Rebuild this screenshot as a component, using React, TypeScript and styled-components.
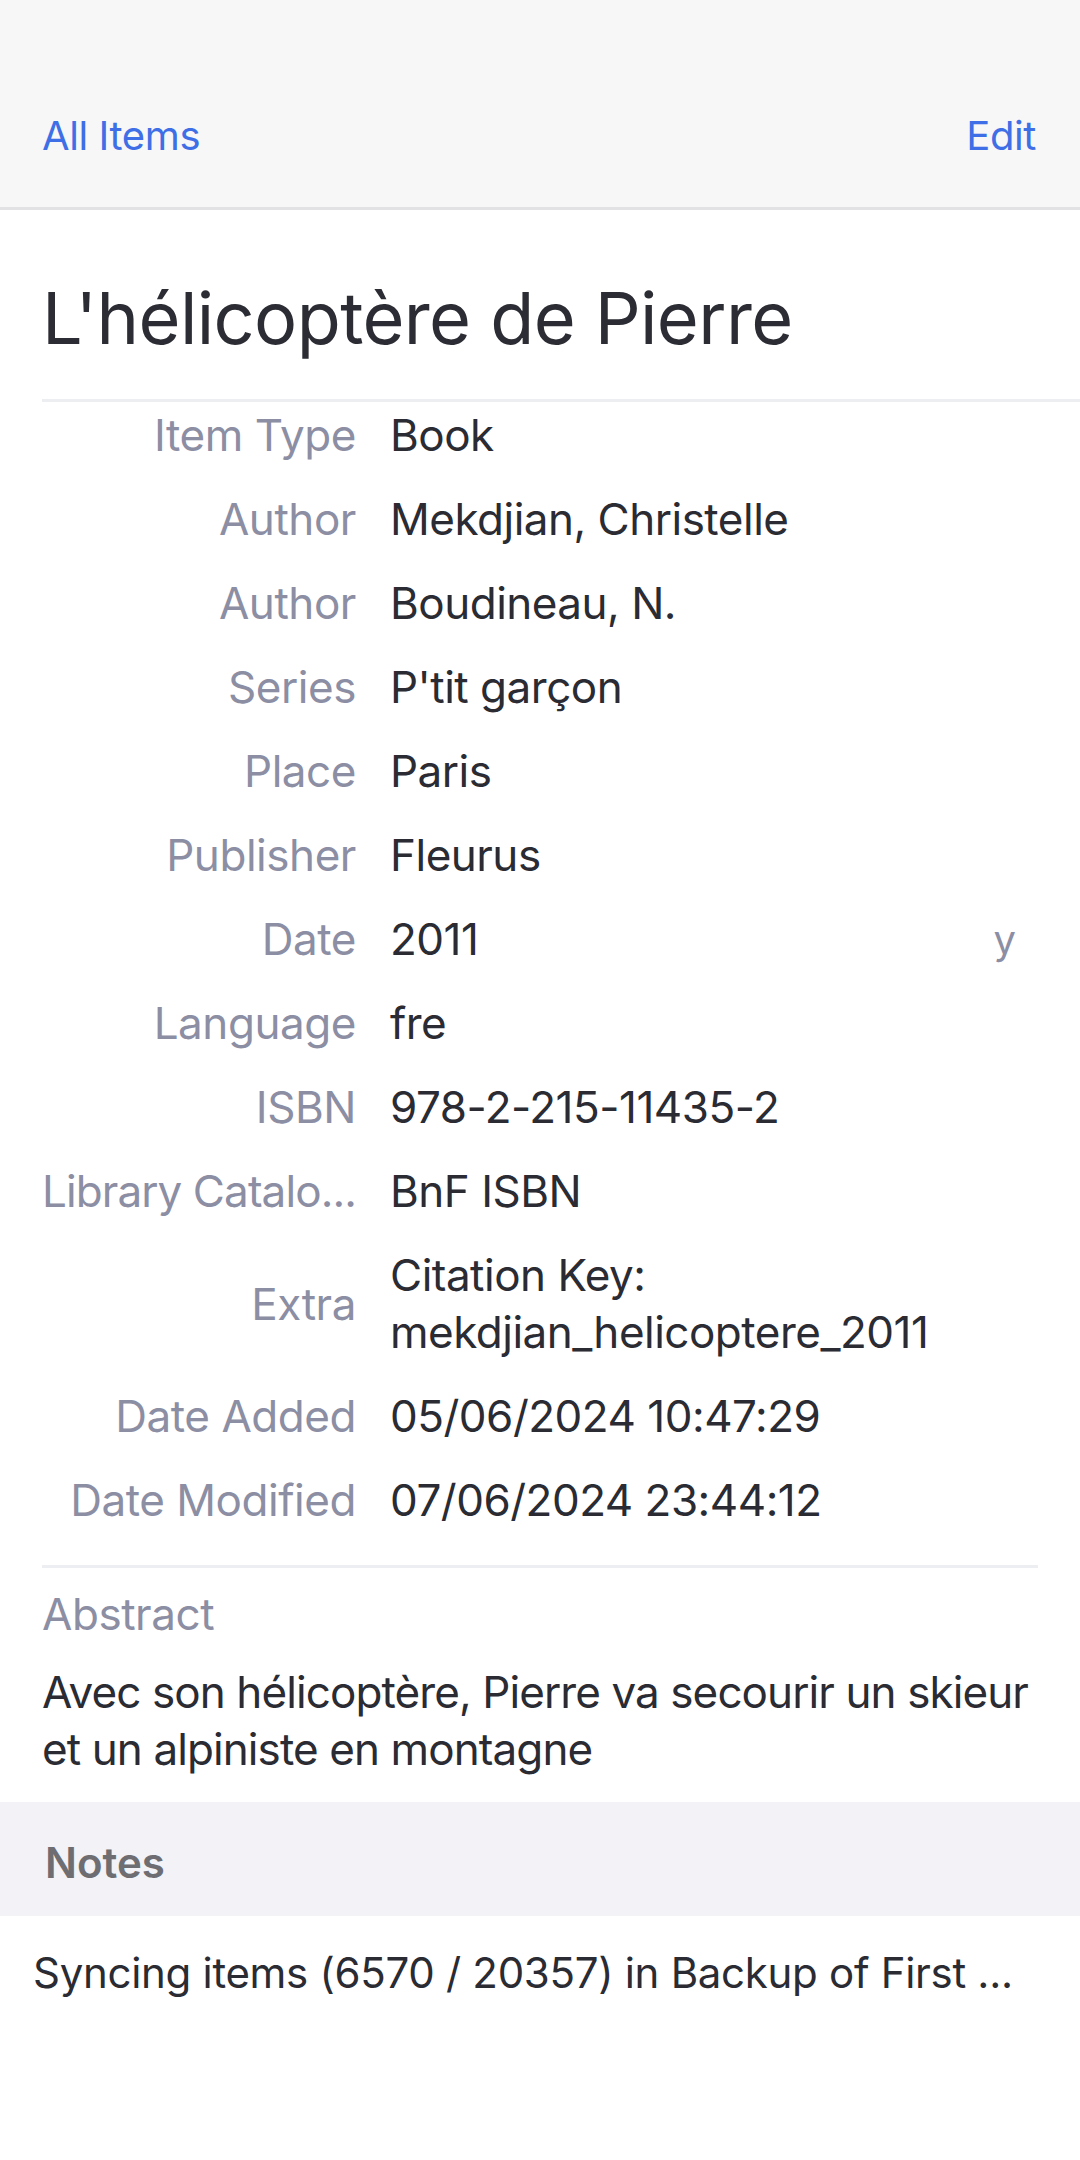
import React from 'react';
import styled, { createGlobalStyle } from 'styled-components';

const GlobalStyle = createGlobalStyle`
  html, body {
    margin: 0;
    padding: 0;
    background: #ffffff;
  }
  body {
    font-family: Inter, 'Noto Sans', 'Liberation Sans', sans-serif;
    -webkit-font-smoothing: antialiased;
  }
  * {
    box-sizing: border-box;
  }
`;

interface Field {
  label: string;
  value: string[];
  hint?: string;
  tight?: boolean;
}

const fields: Field[] = [
  { label: 'Item Type', value: ['Book'] },
  { label: 'Author', value: ['Mekdjian, Christelle'] },
  { label: 'Author', value: ['Boudineau, N.'] },
  { label: 'Series', value: ["P'tit garçon"] },
  { label: 'Place', value: ['Paris'] },
  { label: 'Publisher', value: ['Fleurus'] },
  { label: 'Date', value: ['2011'], hint: 'y' },
  { label: 'Language', value: ['fre'] },
  { label: 'ISBN', value: ['978-2-215-11435-2'] },
  { label: 'Library Catalo...', value: ['BnF ISBN'], tight: true },
  { label: 'Extra', value: ['Citation Key:', 'mekdjian_helicoptere_2011'] },
  { label: 'Date Added', value: ['05/06/2024 10:47:29'] },
  { label: 'Date Modified', value: ['07/06/2024 23:44:12'] },
];

const App = () => {
  return (
    <>
      <GlobalStyle />
      <Page>
        <NavBar>
          <NavButton>All Items</NavButton>
          <NavButton>Edit</NavButton>
        </NavBar>
        <Content>
          <Title>L'hélicoptère de Pierre</Title>
          <FieldList>
            {fields.map((f, i) => (
              <FieldRow key={i}>
                <FieldLabel $tight={f.tight}>
                  <span>{f.label}</span>
                </FieldLabel>
                <FieldValue>
                  {f.value.map((line, j) => (
                    <div key={j}>{line}</div>
                  ))}
                </FieldValue>
                {f.hint && <FieldHint>{f.hint}</FieldHint>}
              </FieldRow>
            ))}
          </FieldList>
          <AbstractBlock>
            <AbstractLabel>Abstract</AbstractLabel>
            <AbstractText>
              Avec son hélicoptère, Pierre va secourir un skieur et un alpiniste en montagne
            </AbstractText>
          </AbstractBlock>
        </Content>
        <SectionHeader>Notes</SectionHeader>
        <SyncStatus>Syncing items (6570 / 20357) in Backup of First ...</SyncStatus>
      </Page>
    </>
  );
};

const Page = styled.div`
  width: 1080px;
  min-height: 2160px;
  background: #ffffff;
  display: flex;
  flex-direction: column;
`;

const NavBar = styled.div`
  height: 210px;
  background: #f7f7f7;
  border-bottom: 3px solid #e2e2e4;
  display: flex;
  align-items: flex-end;
  justify-content: space-between;
  padding: 0 44px 46px 42px;
`;

const NavButton = styled.div`
  font-size: 40px;
  line-height: 50px;
  color: #3e6fe6;
  letter-spacing: -0.4px;
`;

const Content = styled.div`
  padding-left: 42px;
`;

const Title = styled.h1`
  margin: 0;
  padding-top: 63px;
  padding-bottom: 36px;
  font-size: 72px;
  line-height: 90px;
  font-weight: 400;
  color: #2b2c34;
  letter-spacing: -0.6px;
  border-bottom: 3px solid #eceef2;
`;

const FieldList = styled.div`
  display: flex;
  flex-direction: column;
  gap: 27px;
  padding: 5px 0 36px 0;
  border-bottom: 3px solid #eceef2;
  margin-right: 42px;
`;

const FieldRow = styled.div`
  display: flex;
  align-items: center;
  gap: 34px;
  font-size: 44px;
  line-height: 57px;
`;

const FieldLabel = styled.div<{ $tight?: boolean }>`
  width: 314px;
  flex-shrink: 0;
  display: flex;
  justify-content: flex-end;
  color: #8c8ea4;
  letter-spacing: ${(p) => (p.$tight ? '-0.9px' : '-0.45px')};
  white-space: nowrap;
`;

const FieldValue = styled.div`
  flex: 1;
  color: #2a2b33;
  letter-spacing: -0.5px;
`;

const FieldHint = styled.div`
  color: #8c8ea4;
  font-size: 40px;
  padding-right: 22px;
`;

const AbstractBlock = styled.div`
  padding: 18px 42px 24px 0;
  display: flex;
  flex-direction: column;
  gap: 21px;
`;

const AbstractLabel = styled.div`
  font-size: 44px;
  line-height: 57px;
  color: #8c8ea4;
  letter-spacing: -0.45px;
`;

const AbstractText = styled.div`
  font-size: 44px;
  line-height: 57px;
  color: #2a2b33;
  letter-spacing: -0.9px;
`;

const SectionHeader = styled.div`
  height: 114px;
  background: #f2f2f7;
  padding: 32px 45px 0;
  font-size: 42px;
  line-height: 57px;
  font-weight: 600;
  color: #6d6d72;
`;

const SyncStatus = styled.div`
  padding: 28px 33px 0;
  font-size: 42px;
  line-height: 57px;
  color: #2a2b33;
  letter-spacing: -0.3px;
  white-space: nowrap;
  overflow: hidden;
`;

export default App;
